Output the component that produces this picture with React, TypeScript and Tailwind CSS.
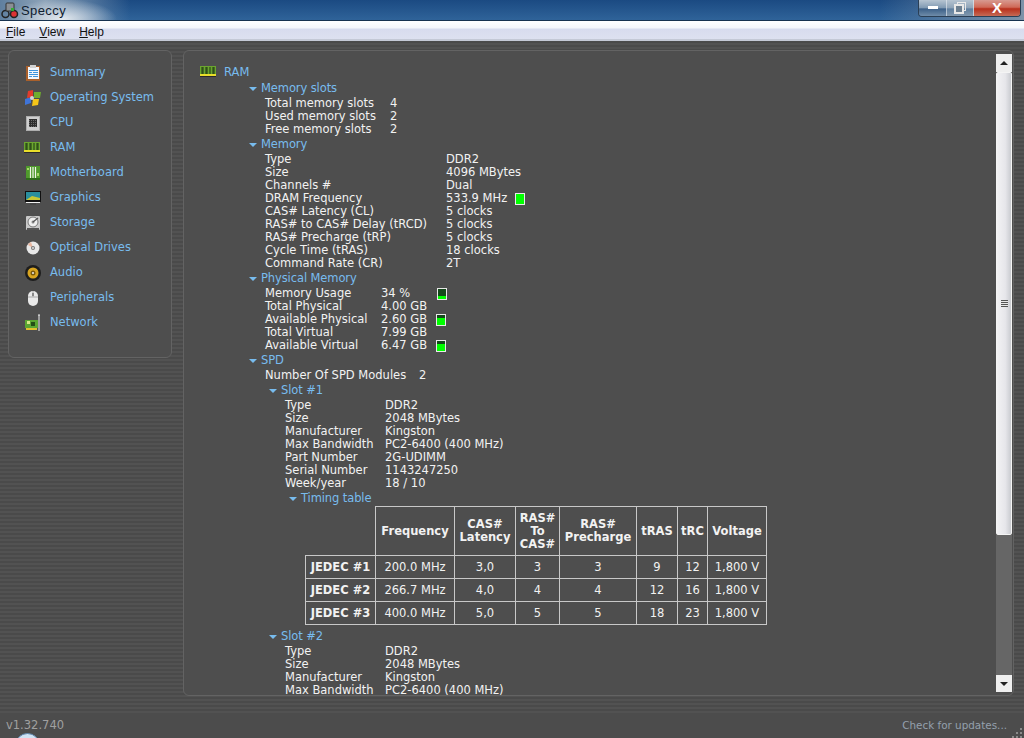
import type { ReactNode } from "react";

const navItems = [
  "Summary",
  "Operating System",
  "CPU",
  "RAM",
  "Motherboard",
  "Graphics",
  "Storage",
  "Optical Drives",
  "Audio",
  "Peripherals",
  "Network",
];

const NavIcon = ({ name }: { name: string }) => {
  switch (name) {
    case "Summary":
      return (
        <svg width="18" height="18" viewBox="0 0 18 18">
          <rect x="2" y="2" width="14" height="15" fill="#a8602c" />
          <rect x="4" y="3" width="11" height="12" fill="#f4f6fa" />
          <rect x="6" y="1" width="6" height="3" fill="#d2d2d2" />
          <path d="M5 6.5h9M5 8.5h3M9 8.5h5M5 10.5h9M5 12.5h3M9 12.5h5" stroke="#3f94dc" />
        </svg>
      );
    case "Operating System":
      return (
        <svg width="18" height="18" viewBox="0 0 18 18">
          <path d="M1 10 L7 8 L7 14 L1 16 Z" fill="#3f74d8" />
          <path d="M4 2 L9 1 L9 8 L3 9 Z" fill="#e23c2c" />
          <path d="M10 3 L17 3 L16 9 L10 9 Z" fill="#6fae2f" />
          <path d="M9 10 L15 10 L14 16 L8 17 Z" fill="#f5c518" />
          <circle cx="8" cy="9" r="2" fill="#d8d8d8" />
        </svg>
      );
    case "CPU":
      return (
        <svg width="18" height="18" viewBox="0 0 18 18">
          <rect x="2" y="2" width="14" height="15" fill="#cfcfcf" />
          <rect x="2.5" y="2.5" width="13" height="14" fill="none" stroke="#8c8c8c" strokeDasharray="1 1" />
          <rect x="5" y="5" width="8" height="8" fill="#2e2e2e" />
          <path d="M5 6.5h8M5 8.5h8M5 10.5h8M5 12.5h8" stroke="#6a6a6a" strokeDasharray="1 1" />
        </svg>
      );
    case "RAM":
      return <RamIcon />;
    case "Motherboard":
      return (
        <svg width="18" height="18" viewBox="0 0 18 18">
          <rect x="2" y="2" width="14" height="14" fill="#4f9a2c" />
          <rect x="2" y="14" width="14" height="2" fill="#2e6b1a" />
          <path d="M6.5 3v11M9 3v11M11.5 3v11" stroke="#f0f5ea" strokeWidth="1.2" />
          <rect x="3" y="4" width="2" height="2" fill="#a8d86a" />
          <rect x="13" y="9" width="2" height="3" fill="#a8d86a" />
        </svg>
      );
    case "Graphics":
      return (
        <svg width="18" height="18" viewBox="0 0 18 18">
          <rect x="1" y="2" width="16" height="11" fill="#111" />
          <rect x="2" y="3" width="14" height="8" fill="#2a8f9e" />
          <path d="M2 11 L8 7 L16 9 V11 Z" fill="#c7c836" />
          <rect x="2" y="13" width="14" height="1" fill="#eee" />
          <rect x="6" y="14" width="6" height="2" fill="#444" />
        </svg>
      );
    case "Storage":
      return (
        <svg width="18" height="18" viewBox="0 0 18 18">
          <rect x="2" y="2" width="14" height="14" rx="1" fill="#c9c9c9" />
          <circle cx="9" cy="8" r="5" fill="#efefef" stroke="#777" />
          <circle cx="9" cy="8" r="1.5" fill="#888" />
          <path d="M9 8 L14 4" stroke="#555" strokeWidth="1.2" />
          <rect x="3" y="14" width="12" height="2" fill="#555" />
        </svg>
      );
    case "Optical Drives":
      return (
        <svg width="18" height="18" viewBox="0 0 18 18">
          <circle cx="9" cy="9" r="6.5" fill="#e8e8e8" />
          <path d="M9 9 L4 6 A6 6 0 0 1 7 3 Z" fill="#e9b7a0" />
          <circle cx="9" cy="9" r="2" fill="#777" />
          <circle cx="9" cy="9" r="1" fill="#ddd" />
        </svg>
      );
    case "Audio":
      return (
        <svg width="18" height="18" viewBox="0 0 18 18">
          <circle cx="9" cy="9" r="8" fill="#1d1d1d" />
          <circle cx="9" cy="9" r="5.5" fill="#d9a520" />
          <circle cx="9" cy="9" r="2.5" fill="#7a5a10" />
          <circle cx="9" cy="9" r="1" fill="#eee" />
        </svg>
      );
    case "Peripherals":
      return (
        <svg width="18" height="18" viewBox="0 0 18 18">
          <rect x="4" y="2" width="10" height="15" rx="5" fill="#e9e9e9" />
          <path d="M9 2v6M4 8h10" stroke="#a9a9a9" />
          <rect x="8" y="4" width="2" height="3" fill="#888" />
        </svg>
      );
    default:
      return (
        <svg width="18" height="18" viewBox="0 0 18 18">
          <rect x="1" y="6" width="13" height="8" fill="#5aa632" />
          <rect x="3" y="7" width="3" height="3" fill="#d5e88a" />
          <rect x="7" y="8" width="4" height="4" fill="#234d17" />
          <rect x="2" y="14" width="11" height="2" fill="#e0c12f" />
          <path d="M15 1v16M14 1h2" stroke="#eee" />
        </svg>
      );
  }
};

const RamIcon = () => (
  <svg width="18" height="18" viewBox="0 0 18 18" className="-ml-[1px]">
    <rect x="1" y="3" width="16" height="9" fill="#6ba52f" />
    <path d="M3 4v7M4 4v7M7 4v7M8 4v7M11 4v7M14 4v7M15 4v7" stroke="#1d3412" />
    <rect x="1" y="11" width="16" height="2" fill="#e9de2a" />
    <rect x="1" y="13" width="16" height="1" fill="#2a2a2a" />
  </svg>
);

// little group arrow in front of the blue headings
const Heading = ({ label, indent }: { label: string; indent: string }) => (
  <div className={`h-[17px] flex items-center gap-[4px] tracking-[-0.1px] text-[#78bcee] ${indent}`}>
    <span className="w-0 h-0 border-x-[4px] border-x-transparent border-t-[4px] border-t-[#78bcee]" />
    <span>{label}</span>
  </div>
);

const Row = ({
  label,
  value,
  width,
  indent,
  meter,
}: {
  label: string;
  value: string;
  width: string;
  indent: string;
  meter?: ReactNode;
}) => (
  <div className={`h-[13px] flex items-center whitespace-nowrap ${indent}`}>
    <span className={width}>{label}</span>
    <span>{value}</span>
    {meter}
  </div>
);

const Meter = ({ fill, className }: { fill: string; className: string }) => (
  <span className={`h-[12px] w-[10px] border border-[#e8e8e8] bg-[#00ff00] flex flex-col ${className}`}>
    <span className={`w-full bg-[#14491a] ${fill}`} />
  </span>
);

const memoryRows = [
  ["Type", "DDR2"],
  ["Size", "4096 MBytes"],
  ["Channels #", "Dual"],
  ["DRAM Frequency", "533.9 MHz"],
  ["CAS# Latency (CL)", "5 clocks"],
  ["RAS# to CAS# Delay (tRCD)", "5 clocks"],
  ["RAS# Precharge (tRP)", "5 clocks"],
  ["Cycle Time (tRAS)", "18 clocks"],
  ["Command Rate (CR)", "2T"],
];

const slotRows = [
  ["Type", "DDR2"],
  ["Size", "2048 MBytes"],
  ["Manufacturer", "Kingston"],
  ["Max Bandwidth", "PC2-6400 (400 MHz)"],
  ["Part Number", "2G-UDIMM"],
  ["Serial Number", "1143247250"],
  ["Week/year", "18 / 10"],
];

const jedec = [
  ["JEDEC #1", "200.0 MHz", "3,0", "3", "3", "9", "12", "1,800 V"],
  ["JEDEC #2", "266.7 MHz", "4,0", "4", "4", "12", "16", "1,800 V"],
  ["JEDEC #3", "400.0 MHz", "5,0", "5", "5", "18", "23", "1,800 V"],
];

const stripes =
  "bg-[repeating-linear-gradient(180deg,#4a4a4a_0px,#4a4a4a_2px,#525252_2px,#525252_4px)]";

export default function App() {
  return (
    <div className="w-[1024px] h-[738px] overflow-hidden relative flex flex-col bg-[#4c4c4c] text-[#f2f2f2] text-[11.5px] leading-[13px] font-['DejaVu_Sans',sans-serif]">
      {/* Title bar */}
      <div className="h-[21px] shrink-0 flex items-center justify-between border-b border-[#17324f] bg-[radial-gradient(ellipse_55px_20px_at_62px_19px,#e3e9ef,transparent),linear-gradient(90deg,#5f7f9f_0px,#8da3b8_45px,transparent_130px,transparent_880px,#7d93a9_1024px),linear-gradient(180deg,#1b4a82,#2f6399)]">
        <div className="flex items-center gap-[2px] pl-[1px] text-[13px] text-[#10202f] font-['Liberation_Sans',sans-serif]">
          <svg width="18" height="18" viewBox="0 0 18 18">
            <circle cx="4.5" cy="13" r="3.5" fill="none" stroke="#222" strokeWidth="1.5" />
            <circle cx="13" cy="13" r="3.5" fill="#d33" stroke="#222" strokeWidth="1.5" />
            <rect x="5" y="2" width="8" height="8" rx="1" fill="#8a8f94" stroke="#333" />
            <rect x="10" y="7" width="3" height="3" fill="#3a3" />
          </svg>
          <span className="tracking-[0.4px]">Speccy</span>
        </div>
        <div className="h-[17px] mr-[3px] -mt-[4px] flex items-stretch border border-t-0 border-[#2b3f55] rounded-b-[4px] overflow-hidden">
          <div className="w-[28px] flex items-center justify-center border-r border-[#dfe6ec]/70 bg-[linear-gradient(180deg,#b6c4d1,#7f99b2_50%,#3b5f87_55%,#6f8ca9)]">
            <span className="w-[10px] h-[3px] bg-white" />
          </div>
          <div className="w-[27px] flex items-center justify-center border-r border-[#dfe6ec]/70 bg-[linear-gradient(180deg,#b6c4d1,#8fa4b8_50%,#5f7f9f_55%,#8298ad)]">
            <svg width="12" height="12" viewBox="0 0 12 12">
              <rect x="3.5" y="0.5" width="8" height="8" fill="none" stroke="#e8e8e8" />
              <rect x="1" y="3" width="8" height="8" fill="#6c7f90" stroke="#e8e8e8" strokeWidth="2" />
            </svg>
          </div>
          <div className="w-[46px] flex items-center justify-center bg-[linear-gradient(180deg,#d79a90,#cf6a58_45%,#b8301c_55%,#c56a55)] text-white">
            <span className="font-bold text-[15px] leading-none font-['Liberation_Sans',sans-serif]">X</span>
          </div>
        </div>
      </div>

      {/* Menu bar */}
      <div className="h-[20px] shrink-0 flex items-center gap-[14px] pl-[6px] pt-[4px] border-b-2 border-[#c4c9d6] bg-[linear-gradient(180deg,#ffffff_0px,#f4f6fb_7px,#d8dcee_8px,#dde1f0_100%)] text-[12px] text-[#111] font-['Liberation_Sans',sans-serif]">
        <span><span className="underline">F</span>ile</span>
        <span><span className="underline">V</span>iew</span>
        <span><span className="underline">H</span>elp</span>
      </div>

      {/* Main */}
      <div className={`h-[672px] shrink-0 flex gap-[11px] pl-[8px] pr-[10px] pt-[9px] pb-[17px] ${stripes}`}>
        {/* Sidebar */}
        <div className="w-[164px] h-[308px] shrink-0 pt-[9px] pl-[15px] bg-[#4e4e4e] border border-[#636363] rounded-[6px]">
          {navItems.map((item) => (
            <div key={item} className="h-[25px] flex items-center gap-[8px] text-[#78bcee]">
              <span className="w-[18px] h-[18px] shrink-0">
                <NavIcon name={item} />
              </span>
              <span>{item}</span>
            </div>
          ))}
        </div>

        {/* Content panel */}
        <div className="flex-1 min-w-0 flex bg-[#4e4e4e] border border-[#636363] rounded-[6px] overflow-hidden">
          <div className="flex-1 min-w-0 h-full overflow-hidden pt-[11px] pl-[16px]">
            <div className="h-[20px] flex items-center gap-[7px] text-[#78bcee]">
              <RamIcon />
              <span>RAM</span>
            </div>
            <div className="pl-[48px] -mt-[2px]">
              <Heading label="Memory slots" indent="pl-[1px]" />
              <Row label="Total memory slots" value="4" width="w-[125px]" indent="pl-[17px]" />
              <Row label="Used memory slots" value="2" width="w-[125px]" indent="pl-[17px]" />
              <Row label="Free memory slots" value="2" width="w-[125px]" indent="pl-[17px]" />

              <Heading label="Memory" indent="pl-[1px]" />
              {memoryRows.map(([label, value]) => (
                <Row
                  key={label}
                  label={label}
                  value={value}
                  width="w-[181px]"
                  indent="pl-[17px]"
                  meter={label === "DRAM Frequency" ? <Meter fill="h-0" className="ml-[8px]" /> : undefined}
                />
              ))}

              <Heading label="Physical Memory" indent="pl-[1px]" />
              <Row label="Memory Usage" value="34 %" width="w-[116px]" indent="pl-[17px]" meter={<Meter fill="h-[7px]" className="ml-[27px]" />} />
              <Row label="Total Physical" value="4.00 GB" width="w-[116px]" indent="pl-[17px]" />
              <Row label="Available Physical" value="2.60 GB" width="w-[116px]" indent="pl-[17px]" meter={<Meter fill="h-[3px]" className="ml-[9px]" />} />
              <Row label="Total Virtual" value="7.99 GB" width="w-[116px]" indent="pl-[17px]" />
              <Row label="Available Virtual" value="6.47 GB" width="w-[116px]" indent="pl-[17px]" meter={<Meter fill="h-[3px]" className="ml-[9px]" />} />

              <Heading label="SPD" indent="pl-[1px]" />
              <Row label="Number Of SPD Modules" value="2" width="w-[154px]" indent="pl-[17px]" />

              <Heading label="Slot #1" indent="pl-[21px]" />
              {slotRows.map(([label, value]) => (
                <Row key={label} label={label} value={value} width="w-[100px]" indent="pl-[37px]" />
              ))}
              <Heading label="Timing table" indent="pl-[41px]" />

              <table className="ml-[57px] -mt-[1px] border-collapse table-fixed w-[461px] text-center">
                <colgroup>
                  <col className="w-[70px]" />
                  <col className="w-[79px]" />
                  <col className="w-[61px]" />
                  <col className="w-[44px]" />
                  <col className="w-[77px]" />
                  <col className="w-[41px]" />
                  <col className="w-[30px]" />
                  <col className="w-[59px]" />
                </colgroup>
                <thead>
                  <tr className="h-[49px] font-bold">
                    <th />
                    <th className="border border-[#c8c8c8]">Frequency</th>
                    <th className="border border-[#c8c8c8]">CAS#<br />Latency</th>
                    <th className="border border-[#c8c8c8]">RAS#<br />To<br />CAS#</th>
                    <th className="border border-[#c8c8c8]">RAS#<br />Precharge</th>
                    <th className="border border-[#c8c8c8]">tRAS</th>
                    <th className="border border-[#c8c8c8]">tRC</th>
                    <th className="border border-[#c8c8c8]">Voltage</th>
                  </tr>
                </thead>
                <tbody>
                  {jedec.map((row) => (
                    <tr key={row[0]} className="h-[23px]">
                      {row.map((cell, i) => (
                        <td key={i} className={`border border-[#c8c8c8] whitespace-nowrap ${i === 0 ? "font-bold" : ""}`}>
                          {cell}
                        </td>
                      ))}
                    </tr>
                  ))}
                </tbody>
              </table>

              <div className="h-[3px]" />
              <Heading label="Slot #2" indent="pl-[21px]" />
              {slotRows.slice(0, 4).map(([label, value]) => (
                <Row key={`2-${label}`} label={label} value={value} width="w-[100px]" indent="pl-[37px]" />
              ))}
            </div>
          </div>

          {/* Scrollbar */}
          <div className="w-[16px] shrink-0 my-[3px] mr-[1px] flex flex-col bg-[#666666]">
            <div className="h-[18px] shrink-0 flex items-center justify-center bg-[#efefef]">
              <span className="w-0 h-0 border-x-[4px] border-x-transparent border-b-[4px] border-b-[#222]" />
            </div>
            <div className="h-[463px] shrink-0 flex items-center justify-center border border-[#f4f4f4] rounded-[2px] bg-[linear-gradient(90deg,#f2f2f4,#e6e6ea_60%,#c9cbd0)]">
              <span className="w-[7px] h-[7px] bg-[repeating-linear-gradient(180deg,#555_0px,#555_1px,#e8e8e8_1px,#e8e8e8_2px)]" />
            </div>
            <div className="flex-1" />
            <div className="h-[17px] shrink-0 flex items-center justify-center bg-[#efefef]">
              <span className="w-0 h-0 border-x-[4px] border-x-transparent border-t-[4px] border-t-[#222]" />
            </div>
          </div>
        </div>
      </div>

      {/* Status bar */}
      <div className="flex-1 flex items-start justify-between pl-[6px] pr-[17px] pt-[6px] text-[#a0a0a0]">
        <span>v1.32.740</span>
        <span className="text-[10.4px] text-[#94a0ac]">Check for updates...</span>
      </div>
      <span className="absolute left-[15px] top-[733px] w-[25px] h-[25px] rounded-full bg-[#cfe2f3] border border-[#5f86ab]" />
      {/* size grip */}
      <svg className="absolute right-0 bottom-0" width="12" height="12" viewBox="0 0 12 12">
        <path d="M8 2h2v2H8zM4 6h2v2H4zM8 6h2v2H8zM0 10h2v2H0zM4 10h2v2H4zM8 10h2v2H8z" fill="#8a8a8a" />
      </svg>
    </div>
  );
}
